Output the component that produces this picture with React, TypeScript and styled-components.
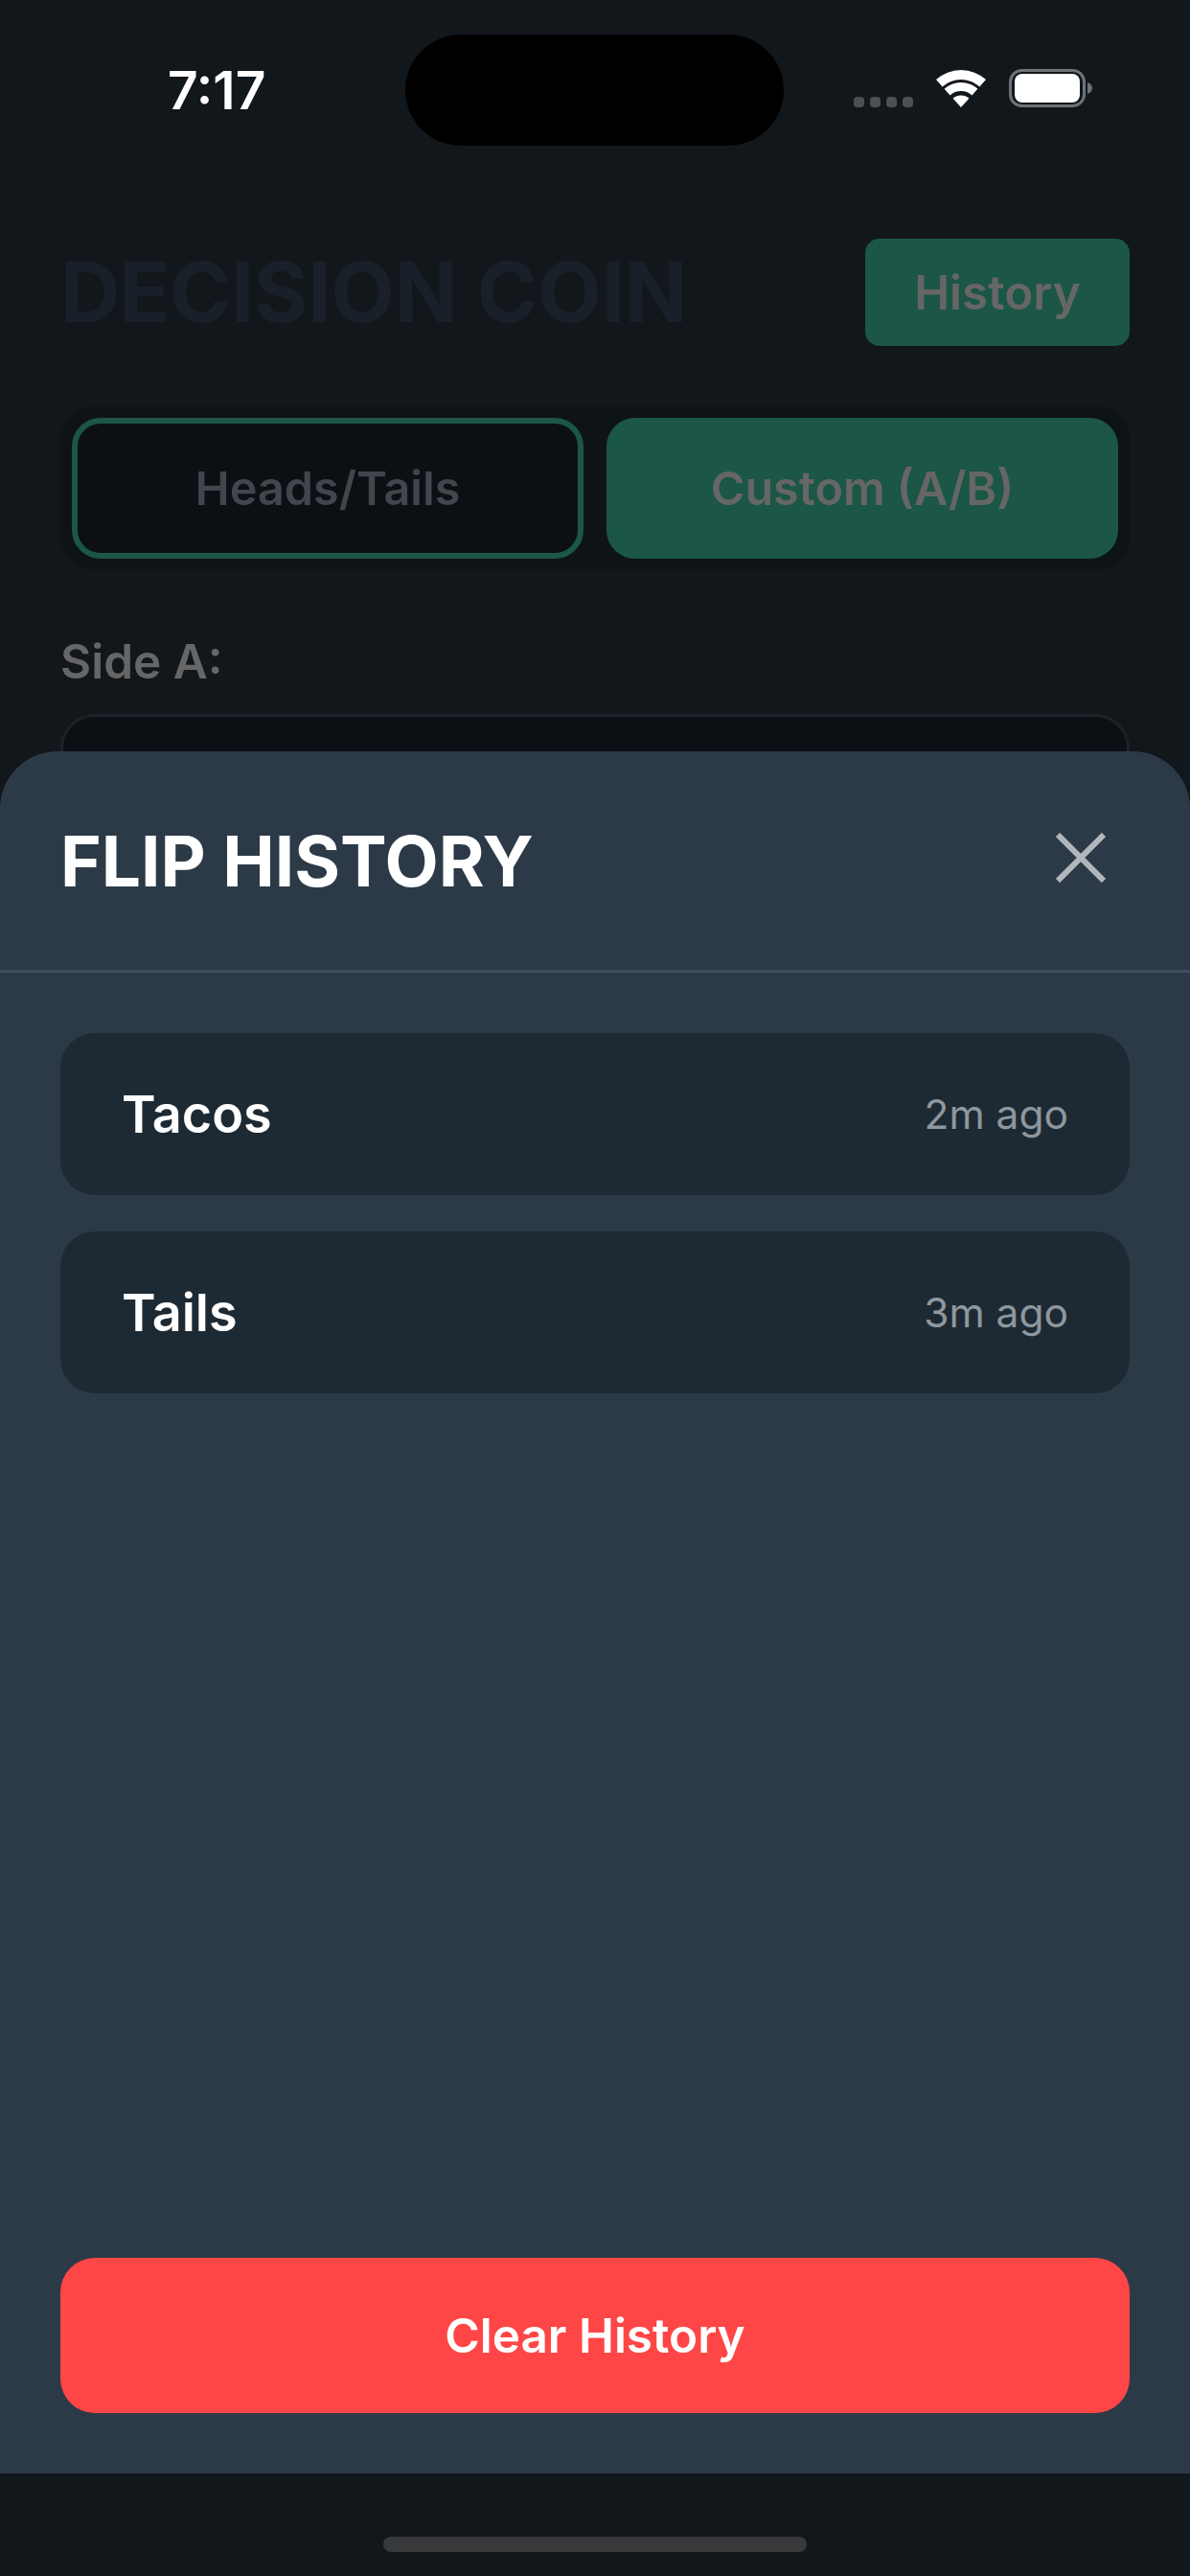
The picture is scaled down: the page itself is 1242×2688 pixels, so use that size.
import styled, { createGlobalStyle } from "styled-components";

const GlobalStyle = createGlobalStyle`
  html, body {
    margin: 0;
    padding: 0;
    background: #12171c;
  }
  * {
    box-sizing: border-box;
  }
`;

const Screen = styled("div")`
  position: relative;
  width: 1242px;
  height: 2688px;
  overflow: hidden;
  background: #12171c;
  font-family: Inter, "Liberation Sans", sans-serif;
`;

const StatusBar = styled("div")`
  display: grid;
  grid-template-columns: 423px 395px 1fr;
  height: 152px;
  padding-top: 36px;
`;

const Clock = styled("div")`
  padding: 28px 0 0 175px;
  font-size: 55px;
  line-height: 60px;
  font-weight: 600;
  color: #ffffff;
`;

const Island = styled("div")`
  height: 116px;
  border-radius: 58px;
  background: #000000;
`;

const StatusIcons = styled("div")`
  display: flex;
  align-items: flex-end;
  height: 76px;
  padding-left: 73px;
`;

const SignalDots = styled("div")`
  display: flex;
  gap: 6px;
  margin-right: 24px;
`;

const SignalDot = styled("span")`
  width: 11px;
  height: 11px;
  border-radius: 4px;
  background: #4c5054;
`;

const WifiIcon = styled("svg")`
  display: block;
  margin-right: 24px;
`;

const BatteryIcon = styled("svg")`
  display: block;
`;

const Content = styled("div")`
  padding: 97px 63px 0;
`;

const Header = styled("div")`
  display: flex;
  align-items: center;
  justify-content: space-between;
  margin-bottom: 63px;
`;

const AppTitle = styled("h1")`
  margin: 0;
  font-size: 86px;
  line-height: 102px;
  font-weight: 700;
  color: #1a2029;
`;

const HistoryButton = styled("div")`
  display: flex;
  align-items: center;
  justify-content: center;
  width: 276px;
  height: 112px;
  border-radius: 15px;
  background: #1b5646;
  font-size: 49.5px;
  font-weight: 600;
  color: #666666;
`;

const ModeTabs = styled("div")`
  display: grid;
  grid-template-columns: 1fr 1fr;
  gap: 24px;
  height: 171px;
  padding: 12px;
  border-radius: 36px;
  background: #0e1317;
  margin-bottom: 66px;
`;

const ModeTab = styled("div")<{ $active?: boolean }>`
  display: flex;
  align-items: center;
  justify-content: center;
  border-radius: 30px;
  border: 6px solid #1b5646;
  background: ${(p) => (p.$active ? "#1b5646" : "#0c1014")};
  font-size: 48.5px;
  font-weight: 600;
  color: ${(p) => (p.$active ? "#666666" : "#42464c")};
`;

const FieldLabel = styled("div")`
  font-size: 49.5px;
  line-height: 58px;
  font-weight: 600;
  color: #666666;
  margin-bottom: 26px;
`;

const FieldInput = styled("div")`
  height: 160px;
  border: 3px solid #1c2228;
  border-radius: 36px;
  background: #0c1014;
`;

const Sheet = styled("div")`
  position: absolute;
  top: 784px;
  left: 0;
  right: 0;
  bottom: 107px;
  display: flex;
  flex-direction: column;
  background: #2c3a47;
  border-radius: 60px 60px 0 0;
`;

const SheetHeader = styled("div")`
  display: flex;
  align-items: center;
  justify-content: space-between;
  height: 231px;
  padding: 0 88px 0 63px;
  border-bottom: 3px solid #3e4d5e;
`;

const SheetTitle = styled("h2")`
  margin: 0;
  font-size: 73px;
  font-weight: 700;
  color: #ffffff;
`;

const CloseIcon = styled("svg")`
  display: block;
  margin-bottom: 6px;
`;

const FlipList = styled("div")`
  flex: 1;
  display: flex;
  flex-direction: column;
  gap: 38px;
  padding: 63px 63px 0;
`;

const FlipRow = styled("div")`
  display: flex;
  align-items: center;
  justify-content: space-between;
  height: 169px;
  padding: 0 64px;
  border-radius: 36px;
  background: #1e2a33;
`;

const FlipResult = styled("span")`
  font-size: 54px;
  font-weight: 600;
  color: #ffffff;
`;

const FlipTime = styled("span")`
  font-size: 42.5px;
  color: #8f979e;
`;

const SheetFooter = styled("div")`
  padding: 0 63px 63px;
`;

const ClearButton = styled("div")`
  display: flex;
  align-items: center;
  justify-content: center;
  height: 162px;
  border-radius: 36px;
  background: #ff4646;
  font-size: 49.5px;
  font-weight: 600;
  color: #ffffff;
`;

const HomeBar = styled("div")`
  position: absolute;
  left: 400px;
  top: 2647px;
  width: 442px;
  height: 16px;
  border-radius: 8px;
  background: #38393b;
`;

const flips = [
  { result: "Tacos", time: "2m ago" },
  { result: "Tails", time: "3m ago" },
];

export default function App() {
  return (
    <Screen>
      <GlobalStyle />
      <StatusBar>
        <Clock>7:17</Clock>
        <Island />
        <StatusIcons>
          <SignalDots>
            {[0, 1, 2, 3].map((i) => (
              <SignalDot key={i} />
            ))}
          </SignalDots>
          <WifiIcon width="52" height="39" viewBox="0 0 52 39">
            <path
              fill="#ffffff"
              d="M0 10 A39 39 0 0 1 52 10 L45.4 17.5 A29 29 0 0 0 6.6 17.5 Z"
            />
            <path
              fill="#ffffff"
              d="M8.6 19.7 A26 26 0 0 1 43.4 19.7 L37.4 26.4 A17 17 0 0 0 14.6 26.4 Z"
            />
            <path fill="#ffffff" d="M17.6 29.7 A12.5 12.5 0 0 1 34.4 29.7 L26 39 Z" />
          </WifiIcon>
          <BatteryIcon width="87" height="40" viewBox="0 0 87 40">
            <rect
              x="1.5"
              y="1.5"
              width="77"
              height="37"
              rx="12"
              fill="none"
              stroke="#6e7276"
              strokeWidth="3"
            />
            <rect x="6" y="5" width="68" height="30" rx="8" fill="#ffffff" />
            <path fill="#6e7276" d="M82 14 C85 15 87 17 87 20 C87 23 85 25 82 26 Z" />
          </BatteryIcon>
        </StatusIcons>
      </StatusBar>

      <Content>
        <Header>
          <AppTitle>DECISION COIN</AppTitle>
          <HistoryButton>History</HistoryButton>
        </Header>
        <ModeTabs>
          <ModeTab>Heads/Tails</ModeTab>
          <ModeTab $active>Custom (A/B)</ModeTab>
        </ModeTabs>
        <FieldLabel>Side A:</FieldLabel>
        <FieldInput />
      </Content>

      <Sheet>
        <SheetHeader>
          <SheetTitle>FLIP HISTORY</SheetTitle>
          <CloseIcon width="52" height="52" viewBox="0 0 52 52">
            <path d="M2 2 L50 50 M50 2 L2 50" stroke="#b1b7bb" strokeWidth="6" fill="none" />
          </CloseIcon>
        </SheetHeader>
        <FlipList>
          {flips.map((flip) => (
            <FlipRow key={flip.time}>
              <FlipResult>{flip.result}</FlipResult>
              <FlipTime>{flip.time}</FlipTime>
            </FlipRow>
          ))}
        </FlipList>
        <SheetFooter>
          <ClearButton>Clear History</ClearButton>
        </SheetFooter>
      </Sheet>

      <HomeBar />
    </Screen>
  );
}
